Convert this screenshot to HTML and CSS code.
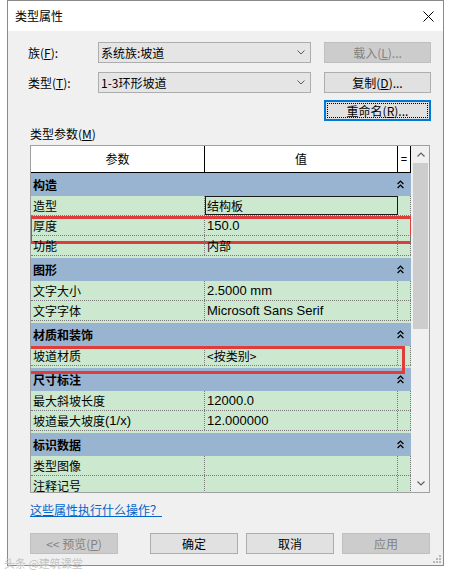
FILE: index.html
```html
<!DOCTYPE html>
<html lang="zh-CN">
<head>
<meta charset="utf-8">
<title>类型属性</title>
<link rel="stylesheet" href="styles.css">
</head>
<body>
<div class="dialog">
  <div class="titlebar">
    <span class="title">类型属性</span>
    <svg class="close" width="11" height="11" viewBox="0 0 11 11"><path d="M0.5 0.5 L10.5 10.5 M10.5 0.5 L0.5 10.5" stroke="#000" stroke-width="1" fill="none"/></svg>
  </div>
  <div class="client">
    <div class="form-row">
      <span class="label">族(<u>F</u>):</span>
      <div class="combo"><span>系统族:坡道</span><svg width="8" height="5" viewBox="0 0 8 5"><path d="M0.5 0.5 L4 4 L7.5 0.5" stroke="#5a5a5a" fill="none"/></svg></div>
      <div class="btn disabled">载入(<u>L</u>)...</div>
    </div>
    <div class="form-row r2">
      <span class="label">类型(<u>T</u>):</span>
      <div class="combo"><span>1-3环形坡道</span><svg width="8" height="5" viewBox="0 0 8 5"><path d="M0.5 0.5 L4 4 L7.5 0.5" stroke="#5a5a5a" fill="none"/></svg></div>
      <div class="btn">复制(<u>D</u>)...</div>
    </div>
    <div class="form-row r3">
      <div class="btn focused">重命名(<u>R</u>)...</div>
    </div>
    <div class="section-label">类型参数(<u>M</u>)</div>
    <div class="grid">
      <div class="table">
        <div class="thead">
          <div class="th">参数</div>
          <div class="th">值</div>
          <div class="th eq">=</div>
        </div>
        <div class="cat first"><span>构造</span><svg class="collapse" width="7" height="9" viewBox="0 0 7 9"><path d="M0.6 4 L3.5 1.1 L6.4 4 M0.6 8 L3.5 5.1 L6.4 8" stroke="#000" stroke-width="1.3" fill="none"/></svg></div>
        <div class="row"><div class="c1">造型</div><div class="c2 boxed">结构板</div><div class="c3"></div></div>
        <div class="row hl hl-a"><div class="c1">厚度</div><div class="c2 num">150.0</div><div class="c3"></div></div>
        <div class="row"><div class="c1">功能</div><div class="c2">内部</div><div class="c3"></div></div>
        <div class="cat"><span>图形</span><svg class="collapse" width="7" height="9" viewBox="0 0 7 9"><path d="M0.6 4 L3.5 1.1 L6.4 4 M0.6 8 L3.5 5.1 L6.4 8" stroke="#000" stroke-width="1.3" fill="none"/></svg></div>
        <div class="row"><div class="c1">文字大小</div><div class="c2 num">2.5000 mm</div><div class="c3"></div></div>
        <div class="row"><div class="c1">文字字体</div><div class="c2 num">Microsoft Sans Serif</div><div class="c3"></div></div>
        <div class="cat"><span>材质和装饰</span><svg class="collapse" width="7" height="9" viewBox="0 0 7 9"><path d="M0.6 4 L3.5 1.1 L6.4 4 M0.6 8 L3.5 5.1 L6.4 8" stroke="#000" stroke-width="1.3" fill="none"/></svg></div>
        <div class="row hl hl-b"><div class="c1">坡道材质</div><div class="c2">&lt;按类别&gt;</div><div class="c3"></div></div>
        <div class="cat"><span>尺寸标注</span><svg class="collapse" width="7" height="9" viewBox="0 0 7 9"><path d="M0.6 4 L3.5 1.1 L6.4 4 M0.6 8 L3.5 5.1 L6.4 8" stroke="#000" stroke-width="1.3" fill="none"/></svg></div>
        <div class="row"><div class="c1">最大斜坡长度</div><div class="c2 num">12000.0</div><div class="c3"></div></div>
        <div class="row"><div class="c1">坡道最大坡度<span class="num">(1/x)</span></div><div class="c2 num">12.000000</div><div class="c3"></div></div>
        <div class="cat"><span>标识数据</span><svg class="collapse" width="7" height="9" viewBox="0 0 7 9"><path d="M0.6 4 L3.5 1.1 L6.4 4 M0.6 8 L3.5 5.1 L6.4 8" stroke="#000" stroke-width="1.3" fill="none"/></svg></div>
        <div class="row"><div class="c1">类型图像</div><div class="c2"></div><div class="c3"></div></div>
        <div class="row"><div class="c1">注释记号</div><div class="c2"></div><div class="c3"></div></div>
      </div>
      <div class="scrollbar">
        <div class="arrow"><svg width="8" height="5" viewBox="0 0 8 5"><path d="M0.5 4.5 L4 1 L7.5 4.5" stroke="#606060" stroke-width="1.2" fill="none"/></svg></div>
        <div class="thumb"></div>
        <div class="track"></div>
        <div class="arrow"><svg width="8" height="5" viewBox="0 0 8 5"><path d="M0.5 0.5 L4 4 L7.5 0.5" stroke="#606060" stroke-width="1.2" fill="none"/></svg></div>
      </div>
    </div>
    <div class="link-row"><span class="link">这些属性执行什么操作？</span></div>
    <div class="buttons">
      <div class="btn disabled b-preview">&lt;&lt; 预览(<u>P</u>)</div>
      <div class="btn b-ok">确定</div>
      <div class="btn b-cancel">取消</div>
      <div class="btn disabled b-apply">应用</div>
    </div>
  </div>
  <svg class="grip" width="8" height="8" viewBox="0 0 8 8"><g fill="#b8b8b8"><rect x="6" y="0" width="2" height="2"/><rect x="3" y="3" width="2" height="2"/><rect x="6" y="3" width="2" height="2"/><rect x="0" y="6" width="2" height="2"/><rect x="3" y="6" width="2" height="2"/><rect x="6" y="6" width="2" height="2"/></g></svg>
</div>
<div class="watermark">头条 @建筑课堂</div>
</body>
</html>
```

FILE: styles.css
```css
* { box-sizing: border-box; }
html, body { margin: 0; padding: 0; background: #fff; }
body {
  width: 451px;
  height: 573px;
  overflow: hidden;
  position: relative;
  font-family: "Noto Sans CJK SC", "Microsoft YaHei", sans-serif;
  font-size: 12px;
  color: #000;
}
u { text-decoration: underline; text-underline-offset: 1px; }

.dialog {
  position: relative;
  margin-left: 7px;
  width: 437px;
  height: 566px;
  border: 1px solid #8a8a8a;
  background: #f0f0f0;
  display: flex;
  flex-direction: column;
}
.titlebar {
  flex: none;
  height: 30px;
  background: #fff;
  display: flex;
  align-items: center;
  justify-content: space-between;
  padding: 0 9px 0 7px;
}
.title { font-size: 12px; line-height: 16px; }

.client {
  flex: 1;
  display: flex;
  flex-direction: column;
  padding-top: 11px;
}
.form-row {
  display: flex;
  align-items: center;
  height: 21px;
}
.form-row.r2 { margin-top: 9px; }
.form-row.r3 { margin-top: 7px; padding-left: 316px; }
.label {
  width: 90px;
  padding-left: 20px;
  line-height: 16px;
}
.combo {
  width: 213px;
  height: 21px;
  border: 1px solid #adadad;
  background: #e5e5e5;
  display: flex;
  align-items: center;
  justify-content: space-between;
  padding: 0 5px 0 2px;
  margin-right: 13px;
  line-height: 16px;
}
.btn {
  width: 107px;
  height: 21px;
  border: 1px solid #adadad;
  background: #e1e1e1;
  display: flex;
  align-items: center;
  justify-content: center;
  line-height: 16px;
}
.btn.disabled {
  background: #cccccc;
  border-color: #bfbfbf;
  color: #838383;
}
.btn.focused {
  border: 2px solid #0078d7;
  outline: 1px dotted #000;
  outline-offset: -4px;
}

.section-label {
  margin-top: 5px;
  height: 19px;
  padding-left: 22px;
  line-height: 16px;
}

.grid {
  margin-left: 22px;
  width: 400px;
  height: 348px;
  border: 1px solid #a0a0a0;
  display: flex;
  flex: none;
}
.table {
  width: 380px;
  overflow: hidden;
  background: #cce8cf;
}
.thead {
  display: grid;
  grid-template-columns: 174px 193px 13px;
  height: 27px;
  background: #fff;
  border-bottom: 1px solid #000;
}
.th {
  display: flex;
  align-items: center;
  justify-content: center;
  border-right: 1px solid #000;
  line-height: 16px;
}
.th.eq { font-family: "Liberation Sans", sans-serif; font-size: 11px; }

.cat {
  margin-top: 2px;
  height: 23px;
  background: #99b4d1;
  display: flex;
  align-items: center;
  justify-content: space-between;
  padding: 0 7px 0 2px;
  font-weight: bold;
  line-height: 16px;
}
.cat.first { margin-top: 0; }
.collapse { display: block; }

.row {
  position: relative;
  display: grid;
  grid-template-columns: 174px 193px 13px;
  height: 20px;
  border-bottom: 1px dotted #7a7a7a;
}
.row > div {
  display: flex;
  align-items: center;
  line-height: 16px;
  white-space: nowrap;
}
.c1 { padding-left: 2px; border-right: 1px dotted #7a7a7a; }
.c2 { padding-left: 2px; border-right: 1px dotted #7a7a7a; }
.c3 { border-right: 1px dotted #7a7a7a; }
.boxed { outline: 1px solid #1a1a1a; outline-offset: -1px; }
.num { font-family: "Liberation Sans", Arial, sans-serif; font-size: 13px; }

.hl::after {
  content: "";
  position: absolute;
  top: 0;
  height: 22px;
  border: 3px solid #e03c3c;
  pointer-events: none;
}
.hl-a::after { left: -2px; width: 378px; }
.hl-b::after { left: -3px; width: 371px; }

.scrollbar {
  width: 18px;
  display: flex;
  flex-direction: column;
  background: #f0f0f0;
}
.arrow {
  height: 17px;
  display: flex;
  align-items: center;
  justify-content: center;
  padding-left: 1px;
}
.thumb {
  height: 166px;
  margin-left: 2px;
  width: 15px;
  background: #cdcdcd;
}
.track { flex: 1; }

.link-row {
  margin-top: 9px;
  height: 16px;
  padding-left: 22px;
  line-height: 16px;
}
.link {
  color: #0066cc;
  text-decoration: underline;
}

.buttons {
  margin-top: 15px;
  display: flex;
  padding-left: 22px;
}
.buttons .btn { width: 88px; }
.b-ok { margin-left: 32px; }
.b-cancel { margin-left: 8px; }
.b-apply { margin-left: 8px; }

.grip {
  position: absolute;
  right: 2px;
  bottom: 2px;
}
.watermark {
  position: absolute;
  left: 4px;
  top: 556px;
  font-size: 11px;
  color: #c4c4c4;
  line-height: 14px;
}
```
